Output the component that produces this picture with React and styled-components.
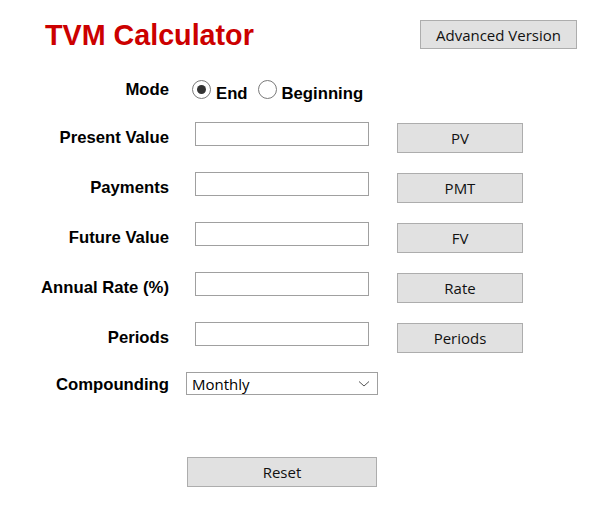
import React, { useState } from 'react';
import styled, { createGlobalStyle } from 'styled-components';

const GlobalStyle = createGlobalStyle`
  body {
    margin: 0;
    background: #ffffff;
    font-family: "Liberation Sans", Arial, sans-serif;
  }
`;

const Page = styled.div`
  width: 607px;
  height: 528px;
  padding: 20px 0 0 39px;
  box-sizing: border-box;
`;

const Header = styled.div`
  display: flex;
  justify-content: space-between;
  align-items: flex-start;
  width: 538px;
  margin-bottom: 28px;
`;

const Title = styled.h1`
  margin: 0 0 0 6px;
  font-family: "Liberation Sans", Arial, sans-serif;
  font-size: 28.7px;
  font-weight: bold;
  line-height: 30px;
  color: #cc0000;
`;

const GreyButton = styled.button`
  width: ${p => p.$w || 126}px;
  height: ${p => p.$h || 30}px;
  padding: 0;
  background: #e1e1e1;
  border: 1px solid #adadad;
  border-radius: 0;
  font-family: "Open Sans", "Noto Sans", sans-serif;
  font-size: 15px;
  color: #111;
  cursor: pointer;
`;

const Form = styled.div`
  display: flex;
  flex-direction: column;
  gap: 20px;
`;

const Row = styled.div`
  display: flex;
  align-items: ${p => p.$align || 'flex-start'};
  height: ${p => p.$h || 30}px;
`;

const Label = styled.label`
  width: 130px;
  flex-shrink: 0;
  text-align: right;
  font-size: 16.7px;
  font-weight: bold;
  color: #000;
  line-height: ${p => p.$lh || 32}px;
`;

const TextInput = styled.input`
  width: 174px;
  height: 24px;
  box-sizing: border-box;
  margin-left: 26px;
  border: 1px solid #a0a0a0;
  padding: 2px 4px;
  font-family: "Open Sans", "Noto Sans", sans-serif;
  font-size: 14px;
`;

const ActionButton = styled(GreyButton)`
  margin-left: 28px;
  margin-top: 1px;
`;

const RadioGroup = styled.div`
  display: flex;
  align-items: center;
  margin-left: 23px;
  gap: 10px;
`;

const RadioOption = styled.label`
  display: flex;
  align-items: center;
  font-size: 16.7px;
  font-weight: bold;
  line-height: 20px;
  cursor: pointer;
  padding-top: 7px;
`;

const RadioDot = styled.span`
  width: 19px;
  height: 19px;
  box-sizing: border-box;
  border-radius: 50%;
  border: 1px solid #7a7a7a;
  background: #fff;
  display: inline-flex;
  align-items: center;
  justify-content: center;
  margin-right: 5px;
  margin-top: -9px;

  &::after {
    content: '';
    width: 9px;
    height: 9px;
    border-radius: 50%;
    background: ${p => (p.$checked ? '#333' : 'transparent')};
  }
`;

const SelectBox = styled.div`
  position: relative;
  margin-left: 17px;
  width: 192px;
  height: 23px;
  box-sizing: border-box;
  border: 1px solid #a0a0a0;
  display: flex;
  align-items: center;
  padding-left: 5px;
  font-family: "Open Sans", "Noto Sans", sans-serif;
  font-size: 15px;
  color: #000;
`;

const Chevron = styled.svg`
  position: absolute;
  right: 7px;
  top: 7px;
`;

const Footer = styled.div`
  padding: 61px 0 0 148px;
`;

const fields = [
  { label: 'Present Value', btn: 'PV' },
  { label: 'Payments', btn: 'PMT' },
  { label: 'Future Value', btn: 'FV' },
  { label: 'Annual Rate (%)', btn: 'Rate' },
  { label: 'Periods', btn: 'Periods' },
];

export default function App() {
  const [mode, setMode] = useState('end');

  return (
    <Page>
      <GlobalStyle />
      <Header>
        <Title>TVM Calculator</Title>
        <GreyButton $w={157} $h={29}>Advanced Version</GreyButton>
      </Header>

      <Form>
        <Row $h={24} $align="center">
          <Label $lh={24}>Mode</Label>
          <RadioGroup>
            <RadioOption onClick={() => setMode('end')}>
              <RadioDot $checked={mode === 'end'} />
              End
            </RadioOption>
            <RadioOption onClick={() => setMode('begin')}>
              <RadioDot $checked={mode === 'begin'} />
              Beginning
            </RadioOption>
          </RadioGroup>
        </Row>

        {fields.map(f => (
          <Row key={f.label}>
            <Label>{f.label}</Label>
            <TextInput />
            <ActionButton>{f.btn}</ActionButton>
          </Row>
        ))}

        <Row $h={24}>
          <Label $lh={26}>Compounding</Label>
          <SelectBox>
            Monthly
            <Chevron width="12" height="8" viewBox="0 0 12 8">
              <path d="M1 1.5 L6 6 L11 1.5" fill="none" stroke="#555" strokeWidth="1" />
            </Chevron>
          </SelectBox>
        </Row>
      </Form>

      <Footer>
        <GreyButton $w={190} $h={30}>Reset</GreyButton>
      </Footer>
    </Page>
  );
}
